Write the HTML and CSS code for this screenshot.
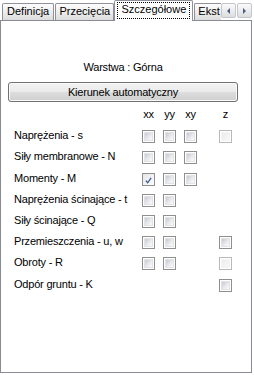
FILE: index.html
```html
<!DOCTYPE html>
<html>
<head>
<meta charset="utf-8">
<link rel="stylesheet" href="styles.css">
</head>
<body>
<div class="window">
  <div class="tabs">
    <div class="tab t1">Definicja</div>
    <div class="tab t2">Przecięcia</div>
    <div class="tab active"><span class="focus">Szczegółowe</span></div>
    <div class="tab clip">Ekst</div>
    <div class="scroller">
      <span class="sbtn"><i class="arrow left"></i></span>
      <span class="sbtn"><i class="arrow right"></i></span>
    </div>
  </div>
  <div class="panel">
    <div class="top">
      <div class="title">Warstwa : Górna</div>
      <div class="button">Kierunek automatyczny</div>
    </div>
    <div class="grid">
      <span class="hd c2">xx</span>
      <span class="hd c3">yy</span>
      <span class="hd c4">xy</span>
      <span class="hd c5">z</span>

      <span class="lbl">Naprężenia - s</span>
      <span class="cb c2"></span><span class="cb c3"></span><span class="cb c4"></span><span class="cb dis c5"></span>

      <span class="lbl">Siły membranowe - N</span>
      <span class="cb c2"></span><span class="cb c3"></span><span class="cb c4"></span>

      <span class="lbl">Momenty - M</span>
      <span class="cb checked c2"><svg viewBox="0 0 9 9" width="9" height="9"><path d="M1.2 4.6 L3.4 7.4 L7.9 1.2" fill="none" stroke="#3a5391" stroke-width="1.6"/></svg></span><span class="cb c3"></span><span class="cb c4"></span>

      <span class="lbl">Naprężenia ścinające - t</span>
      <span class="cb c2"></span><span class="cb c3"></span>

      <span class="lbl">Siły ścinające - Q</span>
      <span class="cb c2"></span><span class="cb c3"></span>

      <span class="lbl">Przemieszczenia - u, w</span>
      <span class="cb c2"></span><span class="cb c3"></span><span class="cb c5"></span>

      <span class="lbl">Obroty - R</span>
      <span class="cb c2"></span><span class="cb c3"></span><span class="cb dis c5"></span>

      <span class="lbl">Odpór gruntu - K</span>
      <span class="cb c5"></span>
    </div>
  </div>
</div>
</body>
</html>
```

FILE: styles.css
```css
html, body {
  margin: 0;
  padding: 0;
  background: #fff;
}
body {
  width: 254px;
  height: 375px;
  overflow: hidden;
  font-family: "Liberation Sans", Arial, sans-serif;
  font-size: 11px;
  color: #000;
}
.window {
  display: flex;
  flex-direction: column;
  width: 252px;
}
.tabs {
  display: flex;
  align-items: flex-end;
  height: 20px;
  padding-left: 2px;
}
.tab {
  box-sizing: border-box;
  height: 17px;
  border: 1px solid #8e9199;
  border-bottom: none;
  border-radius: 2px 2px 0 0;
  background: linear-gradient(#fdfdfd, #ececec 55%, #dcdcdc);
  line-height: 15px;
  text-align: center;
  white-space: nowrap;
}
.t1 { width: 53px; }
.t2 { width: 60px; margin-left: 1px; }
.tab.active {
  position: relative;
  z-index: 2;
  width: 80px;
  height: 21px;
  margin-left: 0;
  margin-bottom: -1px;
  background: #fff;
  padding: 1px 2px 2px 2px;
  line-height: 15px;
}
.focus {
  display: block;
  box-sizing: border-box;
  height: 17px;
  border: 1px dotted #000;
  line-height: 13px;
}
.tab.clip {
  width: 27px;
  margin-left: 1px;
  border-right: none;
  border-radius: 2px 0 0 0;
  text-align: left;
  padding-left: 3px;
  overflow: hidden;
}
.scroller {
  display: flex;
  gap: 1px;
  align-self: flex-start;
  margin-top: 3px;
}
.sbtn {
  box-sizing: border-box;
  width: 15px;
  height: 15px;
  border: 1px solid #c3c6cc;
  border-radius: 2px;
  background: linear-gradient(#fafafa, #ececec 50%, #dcdde0);
  display: flex;
  align-items: center;
  justify-content: center;
}
.arrow {
  width: 0;
  height: 0;
  border-top: 3px solid transparent;
  border-bottom: 3px solid transparent;
}
.arrow.left { border-right: 3px solid #4a5e87; }
.arrow.right { border-left: 3px solid #4a5e87; }

.panel {
  box-sizing: border-box;
  height: 353px;
  border: 1px solid #898c95;
  background: #fff;
  letter-spacing: -0.2px;
}
.top {
  display: flex;
  flex-direction: column;
  padding: 0 13px 0 7px;
}
.title {
  margin-top: 40px;
  line-height: 13px;
  text-align: center;
}
.button {
  box-sizing: border-box;
  margin-top: 8px;
  height: 20px;
  border: 1px solid #707070;
  border-radius: 3px;
  background: linear-gradient(#f2f2f2, #ebebeb 48%, #dddddd 52%, #cfcfcf);
  box-shadow: inset 0 0 0 1px #fbfbfb;
  line-height: 18px;
  text-align: center;
}
.grid {
  display: grid;
  grid-template-columns: 120px 13px 13px 13px 27px;
  column-gap: 8px;
  grid-auto-rows: 21.2px;
  align-items: center;
  margin: 3px 0 0 13px;
}
.lbl {
  grid-column: 1;
  line-height: 13px;
  white-space: nowrap;
  padding-bottom: 2px;
}
.hd {
  display: flex;
  justify-content: center;
  width: 13px;
  line-height: 13px;
  padding-bottom: 2px;
}
.c2 { grid-column: 2; }
.c3 { grid-column: 3; }
.c4 { grid-column: 4; }
.c5 { grid-column: 5; justify-self: end; }
.cb {
  box-sizing: border-box;
  width: 13px;
  height: 13px;
  border: 1px solid #8f8f8f;
  padding: 1px;
  background: #fff;
  display: flex;
}
.cb::before {
  content: "";
  flex: 1;
  background: linear-gradient(135deg, #c6c9d0, #e9eaee 55%, #fbfbfb);
  border: 1px solid #e2e3e6;
}
.cb.checked::before { display: none; }
.cb.checked svg { display: block; margin: 1px; }
.cb.checked {
  background: linear-gradient(135deg, #e4e6ea, #fdfdfd);
}
.cb.dis {
  border-color: #b9b9b9;
}
.cb.dis::before {
  background: linear-gradient(135deg, #ececec, #f7f7f7);
  border-color: #f4f4f4;
}
```
